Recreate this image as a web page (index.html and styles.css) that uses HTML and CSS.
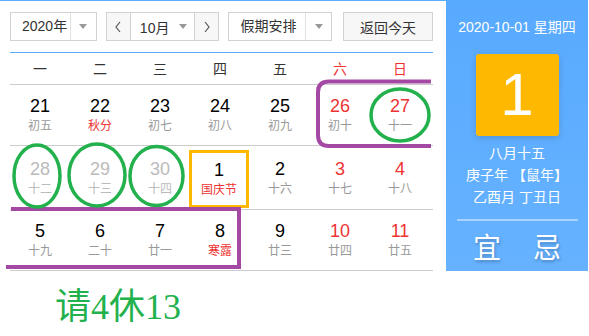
FILE: index.html
```html
<!DOCTYPE html>
<html lang="zh-CN">
<head>
    <meta charset="UTF-8">
    <meta name="viewport" content="width=device-width, initial-scale=1.0">
    <title>万年历</title>
    <link rel="stylesheet" href="styles.css">
</head>
<body>
    <div class="calendar">
        <div class="cal-main">
            <div class="toolbar">
                <div class="select select-year">
                    <span class="select-text">2020年</span>
                    <span class="select-arrow"><i class="caret"></i></span>
                </div>
                <div class="month-picker">
                    <button class="nav-btn">
                        <svg width="8" height="12" viewBox="0 0 8 12"><polyline points="6,1 2,6 6,11" fill="none" stroke="#555" stroke-width="1.2"/></svg>
                    </button>
                    <div class="month-text">10月<i class="caret"></i></div>
                    <button class="nav-btn">
                        <svg width="8" height="12" viewBox="0 0 8 12"><polyline points="2,1 6,6 2,11" fill="none" stroke="#555" stroke-width="1.2"/></svg>
                    </button>
                </div>
                <div class="select select-holiday">
                    <span class="select-text">假期安排</span>
                    <span class="select-arrow"><i class="caret"></i></span>
                </div>
                <button class="today-btn">返回今天</button>
            </div>

            <div class="weekdays">
                <span>一</span><span>二</span><span>三</span><span>四</span><span>五</span>
                <span class="red">六</span><span class="red">日</span>
            </div>

            <div class="week">
                <div class="day"><b>21</b><small>初五</small></div>
                <div class="day"><b>22</b><small class="red">秋分</small></div>
                <div class="day"><b>23</b><small>初七</small></div>
                <div class="day"><b>24</b><small>初八</small></div>
                <div class="day"><b>25</b><small>初九</small></div>
                <div class="day weekend"><b>26</b><small>初十</small></div>
                <div class="day weekend"><b>27</b><small>十一</small></div>
            </div>
            <div class="week">
                <div class="day other"><b>28</b><small>十二</small></div>
                <div class="day other"><b>29</b><small>十三</small></div>
                <div class="day other"><b>30</b><small>十四</small></div>
                <div class="day today"><div class="today-box"><b>1</b><small class="red">国庆节</small></div></div>
                <div class="day"><b>2</b><small>十六</small></div>
                <div class="day weekend"><b>3</b><small>十七</small></div>
                <div class="day weekend"><b>4</b><small>十八</small></div>
            </div>
            <div class="week">
                <div class="day"><b>5</b><small>十九</small></div>
                <div class="day"><b>6</b><small>二十</small></div>
                <div class="day"><b>7</b><small>廿一</small></div>
                <div class="day"><b>8</b><small class="red">寒露</small></div>
                <div class="day"><b>9</b><small>廿三</small></div>
                <div class="day weekend"><b>10</b><small>廿四</small></div>
                <div class="day weekend"><b>11</b><small>廿五</small></div>
            </div>
        </div>

        <div class="cal-side">
            <div class="side-date">2020-10-01 星期四</div>
            <div class="side-day">1</div>
            <div class="side-lunar">
                <p>八月十五</p>
                <p>庚子年 【鼠年】</p>
                <p>乙酉月 丁丑日</p>
            </div>
            <div class="side-yiji">
                <span>宜</span><span>忌</span>
            </div>
        </div>
    </div>

    <div class="note">请4休13</div>

    <!-- hand-drawn marks on top of the screenshot -->
    <svg class="marks" width="589" height="336" viewBox="0 0 589 336">
        <g fill="none" stroke="#a349a4" stroke-width="4">
            <path d="M431,81.5 H329 Q318,81.5 318,92 V135 Q318,146 329,146 H431"/>
            <path d="M11,209 H239 V267 H6"/>
        </g>
        <g fill="none" stroke="#22b14c" stroke-width="3.5">
            <ellipse cx="400" cy="115" rx="29" ry="26"/>
            <ellipse cx="37" cy="176" rx="23" ry="31"/>
            <ellipse cx="97" cy="175" rx="28" ry="31"/>
            <ellipse cx="156.5" cy="176" rx="26.5" ry="29.5"/>
        </g>
    </svg>
</body>
</html>
```

FILE: styles.css
```css
body {
    margin: 0;
    background: #fff;
    color: #333;
    font-family: 'Liberation Sans', 'Noto Sans CJK SC', sans-serif;
    position: relative;
}

.calendar {
    display: flex;
    width: 588px;
    height: 271px;
}

.cal-main {
    width: 446px;
    box-sizing: border-box;
    padding: 0 13px 0 10px;
    border-top: 1px solid #5aacff;
}

/* toolbar */
.toolbar {
    display: flex;
    align-items: center;
    margin-top: 11px;
    height: 29px;
    font-size: 14px;
}

.select {
    display: flex;
    height: 29px;
    box-sizing: border-box;
    border: 1px solid #d2d2d2;
    background: #fff;
}

.select-year {
    width: 87px;
}

.select-holiday {
    width: 104px;
    margin-left: 9px;
}

.select-text {
    flex: 1;
    line-height: 27px;
    padding-left: 11px;
}

.select-arrow {
    width: 25px;
    border-left: 1px solid #e2e2e2;
    display: flex;
    align-items: center;
    justify-content: center;
}

.caret {
    display: inline-block;
    width: 0;
    height: 0;
    border-left: 4px solid transparent;
    border-right: 4px solid transparent;
    border-top: 5px solid #999;
}

.month-picker {
    display: flex;
    width: 114px;
    height: 29px;
    box-sizing: border-box;
    margin-left: 9px;
    border: 1px solid #d2d2d2;
}

.nav-btn {
    width: 24px;
    padding: 0;
    border: none;
    background: #f7f7f7;
    display: flex;
    align-items: center;
    justify-content: center;
}

.month-picker .nav-btn:first-child {
    border-right: 1px solid #d2d2d2;
}

.month-picker .nav-btn:last-child {
    border-left: 1px solid #d2d2d2;
}

.month-text {
    flex: 1;
    display: flex;
    align-items: center;
    justify-content: center;
    gap: 10px;
    padding-left: 2px;
    background: #fff;
}

.today-btn {
    width: 90px;
    height: 29px;
    margin-left: 11px;
    border: 1px solid #d2d2d2;
    background: #f7f7f7;
    color: #333;
    font-family: inherit;
    font-size: 14px;
    padding: 0;
}

/* grid */
.weekdays {
    display: flex;
    margin-top: 11px;
    height: 31px;
    line-height: 33px;
    border-top: 1px solid #5aacff;
    border-bottom: 1px solid #ccc;
    font-size: 14px;
    color: #333;
}

.weekdays span,
.day {
    width: 60px;
    text-align: center;
}

.red {
    color: #e33 !important;
}

.week {
    display: flex;
    align-items: center;
    min-height: 60px;
    border-bottom: 1px solid #ccc;
}

.day {
    display: flex;
    flex-direction: column;
    align-items: center;
}

.day b {
    font-weight: normal;
    font-size: 18px;
    line-height: 22px;
    color: #000;
}

.day small {
    font-size: 12px;
    line-height: 18px;
    color: #999;
}

.day.weekend b {
    color: #e33;
}

.day.other b,
.day.other small {
    color: #bbb;
}

.today {
    padding: 4px 0 1px;
}

.today-box {
    width: 60px;
    box-sizing: border-box;
    margin-left: -2px;
    padding: 6px 0;
    border: 3px solid #ffb800;
    display: flex;
    flex-direction: column;
    align-items: center;
}

/* side panel */
.cal-side {
    width: 142px;
    background: linear-gradient(180deg, #58aaff 0%, #66b2ff 100%);
    color: #fff;
    display: flex;
    flex-direction: column;
    align-items: center;
}

.side-date {
    margin-top: 17px;
    font-size: 14px;
    line-height: 20px;
}

.side-day {
    margin-top: 17px;
    width: 83px;
    height: 82px;
    border-radius: 3px;
    background: #ffb800;
    box-shadow: 0 2px 6px rgba(0, 0, 0, 0.15);
    font-size: 60px;
    line-height: 82px;
    text-align: center;
}

.side-lunar {
    margin-top: 6px;
    text-align: center;
    font-size: 14px;
    line-height: 22px;
}

.side-lunar p {
    margin: 0;
}

.side-yiji {
    margin-top: 11px;
    width: 121px;
    display: flex;
    justify-content: center;
    border-top: 2px solid rgba(255, 255, 255, 0.45);
    padding-top: 8px;
}

.side-yiji span {
    width: 60px;
    text-align: center;
    font-size: 28px;
    line-height: 40px;
    text-shadow: 1px 2px 3px rgba(0, 0, 0, 0.25);
}

.note {
    margin-top: 16px;
    padding-left: 55px;
    font-family: 'Liberation Serif', 'Noto Sans CJK SC', serif;
    font-size: 36px;
    line-height: 40px;
    color: #22b14c;
}

.marks {
    position: absolute;
    top: 0;
    left: 0;
    pointer-events: none;
}
```
